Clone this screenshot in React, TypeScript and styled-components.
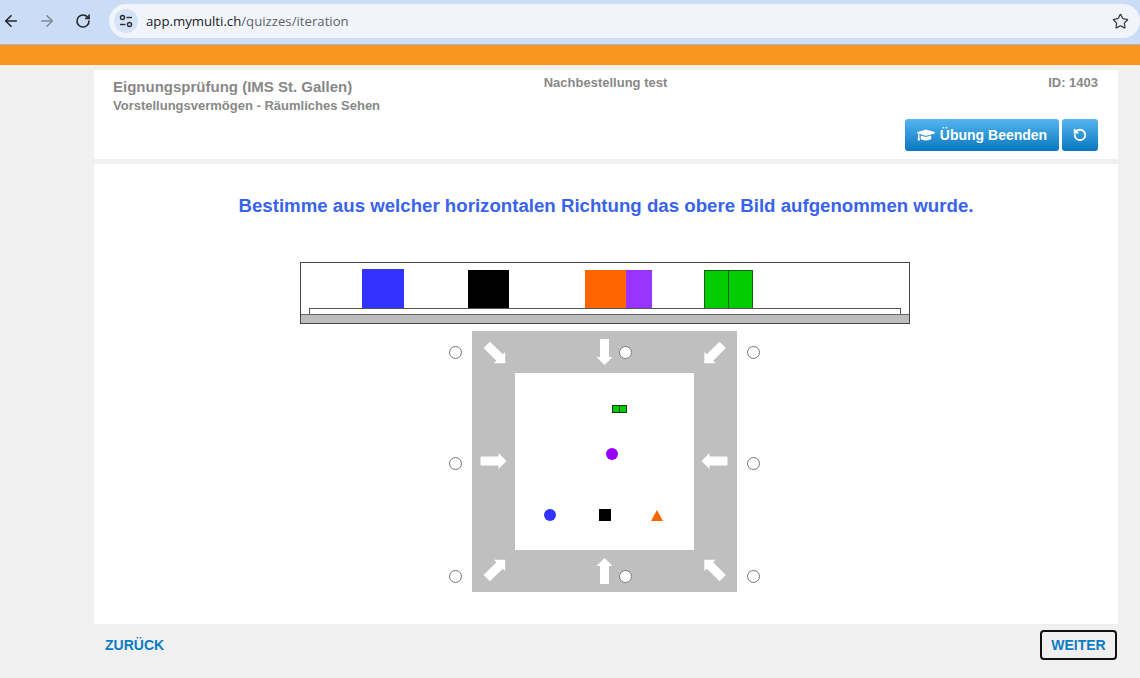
import styled, { createGlobalStyle } from "styled-components";
import { ArrowLeft, ArrowRight, RotateCw, RotateCcw, Star } from "lucide-react";
import { FaGraduationCap } from "react-icons/fa";

const GlobalStyle = createGlobalStyle`
  html, body {
    margin: 0;
    padding: 0;
    height: 100%;
    background: #f0f0f0;
    font-family: "Liberation Sans", Arial, sans-serif;
  }
`;

const Page = styled.div`
  width: 1140px;
  height: 678px;
  overflow: hidden;
`;

const BrowserBar = styled.div`
  height: 45px;
  box-sizing: border-box;
  padding: 4px 0 6px 0;
  display: flex;
  align-items: center;
  background: #cbdcf7;
  border-bottom: 1px solid #aab4c4;
  color: #2c2f33;
`;

const NavIcons = styled.div`
  width: 109px;
  flex: none;
  display: flex;
  align-items: center;
  gap: 18px;
  padding-left: 2px;
  box-sizing: border-box;
`;

const NavButton = styled.span<{ $muted?: boolean }>`
  width: 18px;
  display: flex;
  justify-content: center;
  color: ${(p) => (p.$muted ? "#7c8794" : "#23262a")};
`;

const AddressPill = styled.div`
  flex: 1;
  height: 34px;
  border-radius: 17px;
  background: #f1f5fb;
  display: flex;
  align-items: center;
  padding: 0 11px 0 5px;
`;

const TuneBadge = styled.span`
  width: 24px;
  height: 24px;
  border-radius: 50%;
  background: #d5e3f7;
  display: flex;
  align-items: center;
  justify-content: center;
  margin-right: 8px;
`;

const Url = styled.span`
  font-family: "Open Sans", sans-serif;
  font-size: 13.2px;
  color: #5f6368;
  flex: 1;
  b {
    font-weight: 400;
    color: #202124;
  }
`;

const OrangeBar = styled.div`
  height: 20px;
  background: #f8961f;
`;

const Glow = styled.div`
  height: 5px;
  background: #f5f0e9;
`;

const Main = styled.main`
  padding: 0 22px 0 94px;
`;

const HeaderCard = styled.header`
  background: #fff;
  height: 89px;
  box-sizing: border-box;
  padding: 7px 20px 0 19px;
  margin-bottom: 5px;
`;

const InfoRow = styled.div`
  display: grid;
  grid-template-columns: 1fr auto 1fr;
  color: #888;
  font-weight: 700;
`;

const Title = styled.div`
  font-size: 15px;
  line-height: 19px;
`;

const Subtitle = styled.div`
  font-size: 13px;
  line-height: 20px;
`;

const Meta = styled.div<{ $right?: boolean }>`
  font-size: 13px;
  line-height: 12px;
  text-align: ${(p) => (p.$right ? "right" : "left")};
`;

const Actions = styled.div`
  display: flex;
  justify-content: flex-end;
  gap: 3px;
  margin-top: 3px;
`;

const BlueButton = styled.button<{ $square?: boolean }>`
  height: 32px;
  width: ${(p) => (p.$square ? "36px" : "154px")};
  border: 0;
  border-radius: 3px;
  padding: 0;
  display: flex;
  align-items: center;
  justify-content: center;
  gap: 5px;
  color: #fff;
  font: 700 14px "Liberation Sans", Arial, sans-serif;
  background: linear-gradient(to bottom, #56b5f1, #0877bf);
`;

const QuizCard = styled.section`
  background: #fff;
  height: 460px;
  box-sizing: border-box;
  padding-top: 30px;
`;

const Question = styled.h2`
  margin: 0 0 44px;
  font-size: 18.67px;
  line-height: 24px;
  font-weight: 700;
  text-align: center;
  color: #3a63ec;
`;

const Figure = styled.div`
  display: flex;
  flex-direction: column;
  align-items: center;
  gap: 7px;
  padding-right: 2px;
`;

const Drawing = styled.svg`
  display: block;
`;

const Compass = styled.div`
  position: relative;
  width: 312px;
  padding-left: 23px;
  box-sizing: border-box;
`;

const Radio = styled.input.attrs({ type: "radio", name: "direction" })<{
  $x: number;
  $y: number;
}>`
  position: absolute;
  margin: 0;
  width: 13px;
  height: 13px;
  left: ${(p) => p.$x}px;
  top: ${(p) => p.$y}px;
`;

const Footer = styled.footer`
  display: flex;
  justify-content: space-between;
  align-items: center;
  padding: 6px 1px 0 11px;
`;

const NavLink = styled.button<{ $focused?: boolean }>`
  height: 30px;
  box-sizing: border-box;
  background: transparent;
  color: #0a7cc2;
  font: 700 14px "Liberation Sans", Arial, sans-serif;
  padding: 0;
  width: ${(p) => (p.$focused ? "77px" : "auto")};
  border: ${(p) => (p.$focused ? "2px solid #111" : "0")};
  border-radius: 4px;
`;

const blocks = [
  { x: 62, y: 7, w: 42, h: 39, fill: "#3333ff" },
  { x: 168, y: 8, w: 41, h: 38, fill: "#000" },
  { x: 311, y: 8, w: 41, h: 38, fill: "#9933ff" },
  { x: 285, y: 8, w: 41, h: 38, fill: "#ff6600" },
];

const arrows = [
  { x: 24, y: 23, r: 135 },
  { x: 132.5, y: 21, r: 180 },
  { x: 241.5, y: 23, r: 225 },
  { x: 21.5, y: 130, r: 90 },
  { x: 242.5, y: 130, r: 270 },
  { x: 24, y: 238, r: 45 },
  { x: 132.5, y: 240, r: 0 },
  { x: 241.5, y: 238, r: 315 },
];

const radios = [
  { x: 0, y: 15 },
  { x: 170, y: 15 },
  { x: 298, y: 15 },
  { x: 0, y: 126 },
  { x: 298, y: 126 },
  { x: 0, y: 239 },
  { x: 170, y: 239 },
  { x: 298, y: 239 },
];

const TuneIcon = () => (
  <svg width="16" height="16" viewBox="0 0 16 16" fill="none" stroke="#2c2f33" strokeWidth="1.4">
    <circle cx="4.5" cy="4.5" r="2" />
    <path d="M8.5 4.5H14" />
    <circle cx="11.5" cy="11.5" r="2" />
    <path d="M2 11.5H7.5" />
  </svg>
);

const SideView = () => (
  <Drawing width="610" height="62" viewBox="0 0 610 62" shapeRendering="crispEdges">
    <rect x="0.5" y="0.5" width="609" height="61" fill="#fff" stroke="#444" />
    {blocks.map((b) => (
      <rect key={b.x} x={b.x} y={b.y} width={b.w} height={b.h} fill={b.fill} />
    ))}
    <rect x="404.5" y="8.5" width="24" height="38" fill="#00cc00" stroke="#1a5c1a" />
    <rect x="428.5" y="8.5" width="24" height="38" fill="#00cc00" stroke="#1a5c1a" />
    <rect x="1" y="52" width="608" height="9" fill="#bdbdbd" />
    <rect x="9.5" y="46.5" width="591" height="6" fill="#fff" stroke="#555" />
    <rect x="1" y="52" width="608" height="1" fill="#666" />
  </Drawing>
);

const TopView = () => (
  <Drawing width="265" height="261" viewBox="0 0 265 261">
    <rect width="265" height="261" fill="#bfbfbf" />
    <rect x="43" y="42" width="179" height="177" fill="#fff" />
    {arrows.map((a) => (
      <polygon
        key={a.r}
        points="0,-13 8,-5 4.5,-5 4.5,13 -4.5,13 -4.5,-5 -8,-5"
        fill="#fff"
        transform={`translate(${a.x} ${a.y}) rotate(${a.r})`}
      />
    ))}
    <g shapeRendering="crispEdges">
      <rect x="140.5" y="74.5" width="7" height="7" fill="#00cc00" stroke="#0d3d0d" />
      <rect x="147.5" y="74.5" width="7" height="7" fill="#00cc00" stroke="#0d3d0d" />
      <rect x="127" y="178" width="12" height="12" fill="#000" />
    </g>
    <circle cx="140" cy="123" r="6" fill="#9900ff" />
    <circle cx="78" cy="184" r="6" fill="#3333ff" />
    <polygon points="179,190 191,190 185,179" fill="#ff6600" />
  </Drawing>
);

const App = () => (
  <Page>
    <GlobalStyle />
    <BrowserBar>
      <NavIcons>
        <NavButton>
          <ArrowLeft size={18} strokeWidth={2.2} />
        </NavButton>
        <NavButton $muted>
          <ArrowRight size={18} strokeWidth={2} />
        </NavButton>
        <NavButton>
          <RotateCw size={16} strokeWidth={2.4} />
        </NavButton>
      </NavIcons>
      <AddressPill>
        <TuneBadge>
          <TuneIcon />
        </TuneBadge>
        <Url>
          <b>app.mymulti.ch</b>/quizzes/iteration
        </Url>
        <Star size={17} strokeWidth={1.8} color="#3c4043" />
      </AddressPill>
    </BrowserBar>
    <OrangeBar />
    <Glow />
    <Main>
      <HeaderCard>
        <InfoRow>
          <div>
            <Title>Eignungsprüfung (IMS St. Gallen)</Title>
            <Subtitle>Vorstellungsvermögen - Räumliches Sehen</Subtitle>
          </div>
          <Meta>Nachbestellung test</Meta>
          <Meta $right>ID: 1403</Meta>
        </InfoRow>
        <Actions>
          <BlueButton>
            <FaGraduationCap size={18} />
            Übung Beenden
          </BlueButton>
          <BlueButton $square>
            <RotateCcw size={14} strokeWidth={3.2} />
          </BlueButton>
        </Actions>
      </HeaderCard>
      <QuizCard>
        <Question>Bestimme aus welcher horizontalen Richtung das obere Bild aufgenommen wurde.</Question>
        <Figure>
          <SideView />
          <Compass>
            <TopView />
            {radios.map((r) => (
              <Radio key={`${r.x}-${r.y}`} $x={r.x} $y={r.y} />
            ))}
          </Compass>
        </Figure>
      </QuizCard>
      <Footer>
        <NavLink>ZURÜCK</NavLink>
        <NavLink $focused>WEITER</NavLink>
      </Footer>
    </Main>
  </Page>
);

export default App;
